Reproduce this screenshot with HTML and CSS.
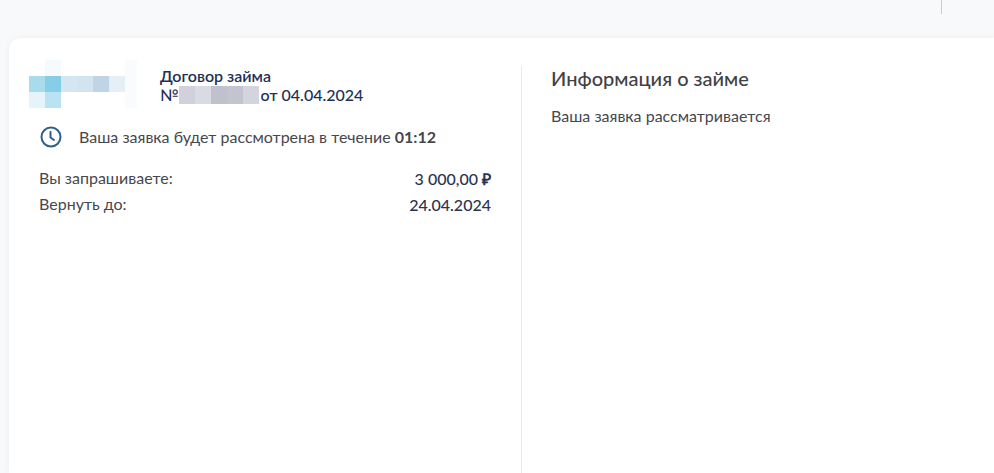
FILE: index.html
```html
<!DOCTYPE html>
<html lang="ru">
<head>
  <meta charset="UTF-8">
  <meta name="viewport" content="width=device-width, initial-scale=1.0">
  <title>Договор займа</title>
  <link rel="stylesheet" href="styles.css">
</head>
<body>
  <header class="topbar">
    <div class="topbar-divider"></div>
  </header>

  <main class="card">
    <section class="loan">
      <div class="loan-head">
        <svg class="logo" width="108" height="48" viewBox="0 0 108 48">
          <rect x="16" y="0" width="16" height="16" fill="#f7fafc"/>
          <rect x="0" y="16" width="16" height="16" fill="#a9dcea"/>
          <rect x="16" y="16" width="16" height="16" fill="#86cde6"/>
          <rect x="32" y="16" width="16" height="16" fill="#d3e6f2"/>
          <rect x="48" y="16" width="16" height="16" fill="#d3e4f1"/>
          <rect x="64" y="16" width="16" height="16" fill="#bed5e8"/>
          <rect x="80" y="16" width="16" height="16" fill="#e7eff6"/>
          <rect x="0" y="32" width="16" height="16" fill="#e6f3fa"/>
          <rect x="16" y="32" width="16" height="16" fill="#b9e2f2"/>
          <rect x="96" y="0" width="12" height="48" fill="#fafbfd"/>
        </svg>
        <div class="loan-title">
          <div>Договор займа</div>
          <div class="loan-number">№<span class="redacted"><i></i><i></i><i></i><i></i><i></i></span>от 04.04.2024</div>
        </div>
      </div>

      <div class="notice">
        <svg class="clock" width="22" height="22" viewBox="0 0 22 22" fill="none" stroke="#2d5f8a" stroke-width="2" stroke-linecap="round" stroke-linejoin="round">
          <circle cx="11" cy="11" r="9.5"/>
          <path d="M10.5 6v5.5l3.5 2.5"/>
        </svg>
        <span>Ваша заявка будет рассмотрена в течение <b>01:12</b></span>
      </div>

      <div class="terms">
        <div class="term"><span>Вы запрашиваете:</span><strong>3 000,00 <b>₽</b></strong></div>
        <div class="term"><span>Вернуть до:</span><strong>24.04.2024</strong></div>
      </div>
    </section>

    <section class="info">
      <h2>Информация о займе</h2>
      <p>Ваша заявка рассматривается</p>
    </section>
  </main>
</body>
</html>
```
FILE: styles.css
```css
html, body {
  height: 100%;
}

body {
  font-family: Lato, "Open Sans", sans-serif;
  background-color: #f8f9fb;
  margin: 0;
  overflow: hidden;
  display: flex;
  flex-direction: column;
  color: #46484d;
}

.topbar {
  height: 38px;
  flex-shrink: 0;
  display: flex;
  justify-content: flex-end;
  padding-right: 52px;
}

.topbar-divider {
  width: 1px;
  height: 14px;
  background-color: #c9ccd1;
}

.card {
  flex: 1;
  margin-left: 9px;
  background-color: #fff;
  border-radius: 12px 0 0 0;
  box-shadow: 0 0 8px rgba(0, 0, 0, 0.05);
  display: flex;
  padding-top: 28px;
}

.loan {
  width: 513px;
  box-sizing: border-box;
  padding-left: 20px;
  padding-right: 30px;
  border-right: 1px solid #e8e9ec;
}

.loan-head {
  display: flex;
  align-items: flex-start;
}

.logo {
  flex-shrink: 0;
  margin-top: -6px;
  margin-right: 23px;
}

.loan-title {
  font-size: 16px;
  font-weight: 600;
  line-height: 19px;
  color: #1e2f55;
}

.loan-number {
  font-weight: 500;
  display: flex;
  align-items: center;
}

.redacted {
  display: flex;
  height: 18px;
  margin: 0 2px 0 0;
}

.redacted i {
  width: 16px;
  background-color: #d0d1dc;
}

.redacted i:nth-child(2) {
  background-color: #d9dae3;
}

.redacted i:nth-child(3) {
  background-color: #c1c1ce;
}

.redacted i:nth-child(4) {
  background-color: #c4c4d1;
}

.redacted i:nth-child(5) {
  background-color: #d3d4de;
}

.notice {
  display: flex;
  align-items: center;
  gap: 17px;
  margin-top: 18px;
  margin-left: 11px;
  font-size: 16px;
  line-height: 22px;
}

.terms {
  margin-top: 18px;
  margin-left: 10px;
  font-size: 16px;
}

.term {
  display: flex;
  justify-content: space-between;
  line-height: 26px;
}

.term span {
  position: relative;
  top: -1px;
}

.term strong {
  font-size: 16px;
  font-weight: 500;
  color: #2b3350;
}

.info {
  padding-left: 29px;
}

.info h2 {
  font-size: 20px;
  font-weight: 500;
  line-height: 26px;
  margin: -1px 0 0;
  color: #3f4145;
}

.info p {
  font-size: 16px;
  line-height: 20px;
  margin: 15px 0 0;
}
```
